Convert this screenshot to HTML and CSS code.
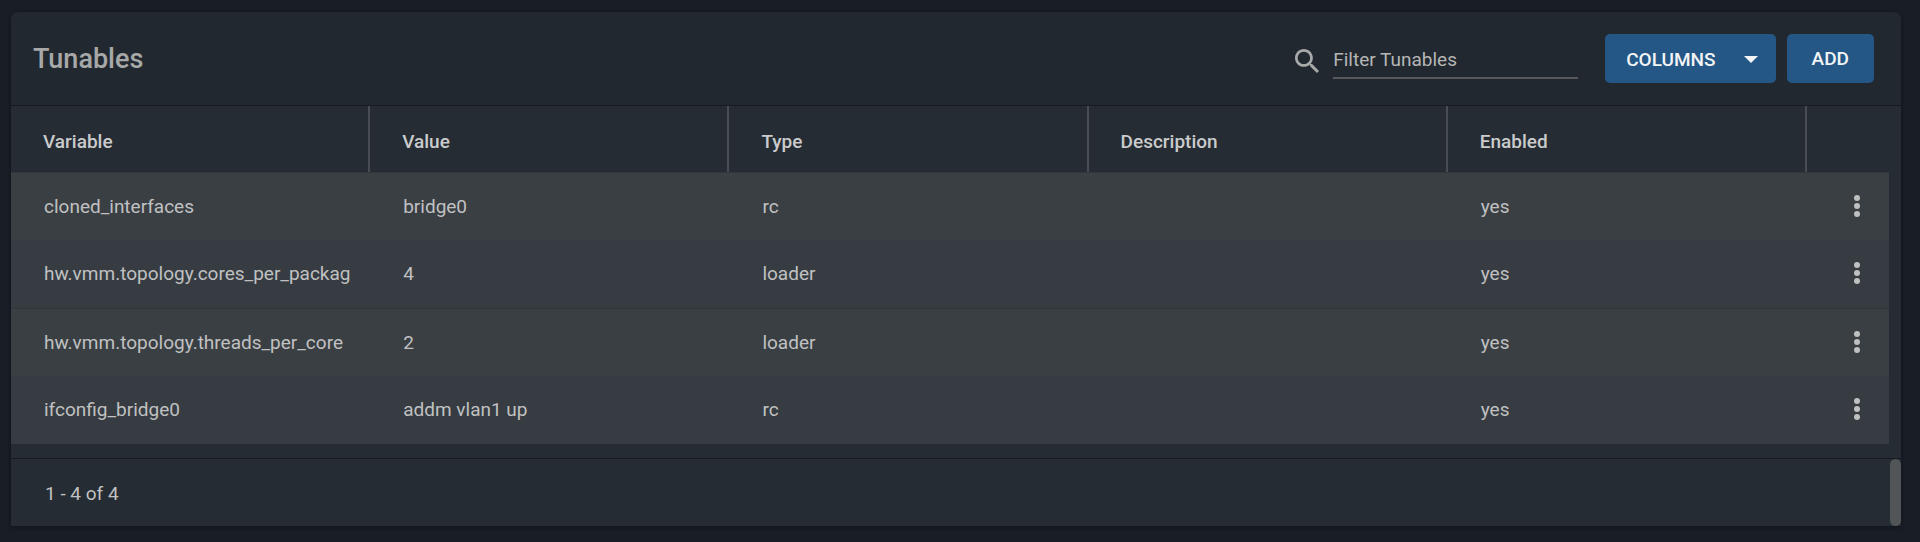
FILE: index.html
```html
<!DOCTYPE html>
<html lang="en">
<head>
<meta charset="utf-8">
<meta name="viewport" content="width=device-width, initial-scale=1">
<title>Tunables</title>
<link rel="stylesheet" href="styles.css">
</head>
<body>
<svg class="sprite" aria-hidden="true">
  <symbol id="dots" viewBox="0 0 6 22">
    <circle cx="3" cy="3" r="3"/><circle cx="3" cy="11" r="3"/><circle cx="3" cy="19" r="3"/>
  </symbol>
</svg>
<main class="card">
  <header class="toolbar">
    <h1 class="title">Tunables</h1>
    <div class="filter">
      <svg class="search-icon" viewBox="3 3 17.49 17.49" aria-hidden="true"><path d="M15.5 14h-.79l-.28-.27C15.41 12.59 16 11.11 16 9.5 16 5.91 13.09 3 9.5 3S3 5.91 3 9.5 5.91 16 9.5 16c1.61 0 3.09-.59 4.23-1.57l.27.28v.79l5 4.99L20.49 19l-4.99-5zm-6 0C7.01 14 5 11.99 5 9.5S7.01 5 9.5 5 14 7.01 14 9.5 11.99 14 9.5 14z"/></svg>
      <input class="filter-input" type="text" placeholder="Filter Tunables" aria-label="Filter Tunables">
    </div>
    <div class="actions">
      <button class="button button-columns" type="button">COLUMNS
        <svg class="caret" viewBox="0 0 14 7" aria-hidden="true"><path d="M0 0h14L7 7z"/></svg>
      </button>
      <button class="button" type="button">ADD</button>
    </div>
  </header>
  <div class="table-area">
    <table class="table">
      <thead>
        <tr>
          <th scope="col">Variable</th>
          <th scope="col">Value</th>
          <th scope="col">Type</th>
          <th scope="col">Description</th>
          <th scope="col">Enabled</th>
          <th class="menu-col"></th>
        </tr>
      </thead>
      <tbody>
        <tr>
          <td><div class="cell">cloned_interfaces</div></td><td>bridge0</td><td>rc</td><td></td><td>yes</td>
          <td class="menu-col"><button class="menu" type="button" aria-label="Options for cloned_interfaces"><svg class="dots"><use href="#dots"/></svg></button></td>
        </tr>
        <tr>
          <td><div class="cell">hw.vmm.topology.cores_per_packag</div></td><td>4</td><td>loader</td><td></td><td>yes</td>
          <td class="menu-col"><button class="menu" type="button" aria-label="Options for cores_per_package"><svg class="dots"><use href="#dots"/></svg></button></td>
        </tr>
        <tr>
          <td><div class="cell">hw.vmm.topology.threads_per_core</div></td><td>2</td><td>loader</td><td></td><td>yes</td>
          <td class="menu-col"><button class="menu" type="button" aria-label="Options for threads_per_core"><svg class="dots"><use href="#dots"/></svg></button></td>
        </tr>
        <tr>
          <td><div class="cell">ifconfig_bridge0</div></td><td>addm vlan1 up</td><td>rc</td><td></td><td>yes</td>
          <td class="menu-col"><button class="menu" type="button" aria-label="Options for ifconfig_bridge0"><svg class="dots"><use href="#dots"/></svg></button></td>
        </tr>
      </tbody>
    </table>
  </div>
  <footer class="footer">
    <span class="count">1 - 4 of 4</span>
    <span class="thumb"></span>
  </footer>
</main>
</body>
</html>
```
FILE: styles.css
```css
* { box-sizing: border-box; }

body {
  margin: 0;
  padding: 12px 19px 16px 11px;
  background: #181d26;
  color: #c0c1c2;
  font: 19px/24px Roboto, sans-serif;
}

.sprite { display: none; }

.card {
  background: #252c33;
  border-radius: 7px 7px 0 0;
  box-shadow: 0 1px 4px rgba(0, 0, 0, 0.35);
}

.toolbar {
  display: flex;
  align-items: center;
  padding: 22px 27px 22px 22px;
  background: #22282f;
  border-bottom: 1px solid #161b21;
  border-radius: 7px 7px 0 0;
}

.title {
  margin: 0 auto 0 0;
  color: #a7a8a8;
  font-size: 27px;
  font-weight: 500;
  line-height: 32px;
}

.filter {
  display: flex;
  align-items: center;
  gap: 14px;
  padding-top: 4px;
  margin-right: 27px;
}

.search-icon {
  width: 24px;
  height: 24px;
  fill: #a7a8a8;
}

.filter-input {
  width: 245px;
  height: 36px;
  padding: 2px 0;
  border: 0;
  border-bottom: 2px solid #57595b;
  background: none;
  color: #c0c1c2;
  font: inherit;
}

.filter-input::placeholder {
  color: #b5b6b6;
  opacity: 1;
}

.actions {
  display: flex;
  gap: 11px;
}

.button {
  display: flex;
  align-items: center;
  gap: 28px;
  height: 49px;
  padding: 0 25px;
  border: 0;
  border-radius: 5px;
  background: #245785;
  color: #f2f4f6;
  font: inherit;
  font-weight: 500;
}

.button-columns { padding: 2px 18px 0 21px; }

.caret {
  width: 14px;
  height: 7px;
  fill: #f2f4f6;
}

.table-area { padding: 0 12px 14px 0; }

.table {
  width: 100%;
  table-layout: fixed;
  border-collapse: separate;
  border-spacing: 0;
}

.table th {
  height: 66px;
  padding: 6px 18px 0 32px;
  border-right: 2px solid #474d53;
  color: #cacbcc;
  font-weight: 500;
  text-align: left;
}

.table td {
  height: 68px;
  padding: 0 18px 0 33px;
  background: #363c41;
}

.table tr:nth-child(odd) td {
  background: #3a3f43;
  border-top: 1px solid #32373c;
}

.table .menu-col {
  width: 82px;
  padding: 0 29px 2px 0;
  border-right: 0;
}

.cell {
  overflow: hidden;
  white-space: nowrap;
}

.menu {
  display: flex;
  margin-left: auto;
  padding: 0;
  border: 0;
  background: none;
}

.dots {
  width: 6px;
  height: 22px;
  fill: #bfc0c0;
}

.footer {
  display: flex;
  align-items: stretch;
  justify-content: space-between;
  height: 68px;
  border-top: 1px solid #161b21;
}

.count {
  align-self: center;
  padding: 2px 0 0 34px;
}

.thumb {
  width: 11px;
  border-radius: 6px;
  background: #525558;
}
```
